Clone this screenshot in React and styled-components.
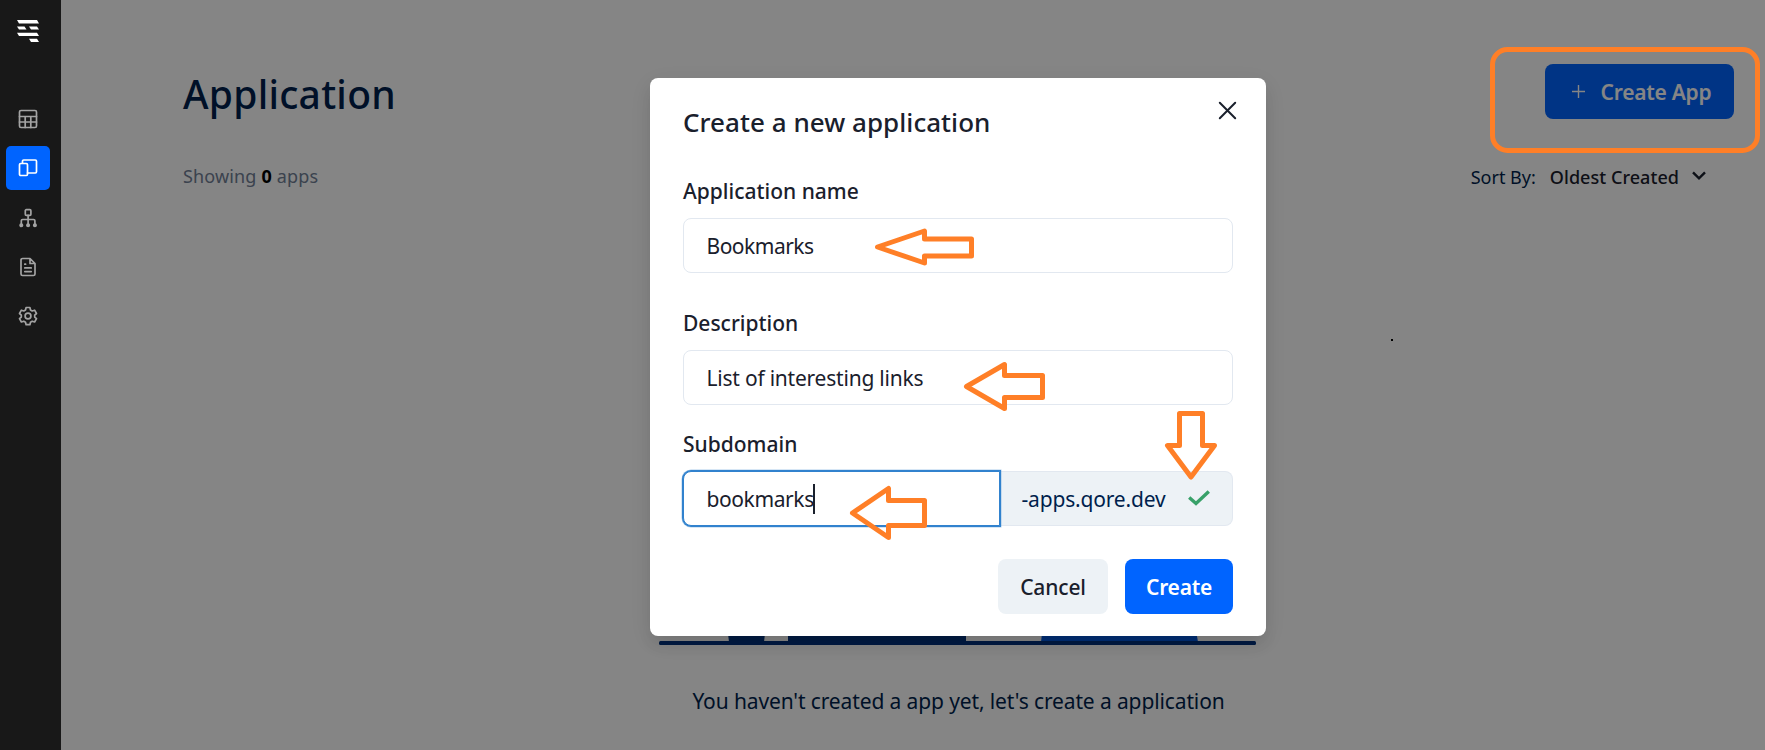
import React from "react";
import styled, { createGlobalStyle, css } from "styled-components";

const GlobalStyle = createGlobalStyle`
  * { box-sizing: border-box; }
  body {
    margin: 0;
    background: #fff;
    color: #1a202c;
    font-family: "Noto Sans", "Open Sans", sans-serif;
    overflow: hidden;
  }
  button, input { font-family: inherit; }
`;

const Shell = styled.div`
  display: flex;
  height: 750px;
  position: relative;
  overflow: hidden;
`;

const Sidebar = styled.nav`
  width: 61px;
  flex: none;
  padding-top: 20px;
  display: flex;
  flex-direction: column;
  align-items: center;
  background: #181818;
  z-index: 2;
`;

const Logo = styled.svg`
  width: 22px;
  height: 22px;
  margin: 0 5px 55px 0;
  fill: #fff;
`;

const NavList = styled.div`
  display: flex;
  flex-direction: column;
  gap: 5.3px;
  margin-right: 5px;
`;

const NavItem = styled.button`
  width: 44px;
  height: 44px;
  padding: 0;
  border: 0;
  border-radius: 5px;
  display: grid;
  place-items: center;
  background: ${(p) => (p.$active ? "#0064ff" : "transparent")};
  color: ${(p) => (p.$active ? "#fff" : "#a3a3a3")};
`;

const NavIcon = styled.svg`
  width: 20px;
  height: 20px;
  fill: none;
  stroke: currentColor;
  stroke-width: 1.7;
  stroke-linecap: round;
  stroke-linejoin: round;
`;

const Main = styled.main`
  flex: 1;
  padding: 64px 31px 0 122px;
`;

const PageHeader = styled.header`
  height: 55px;
  display: flex;
  align-items: center;
  justify-content: space-between;
`;

const PageTitle = styled.h1`
  margin: 5px 0 0;
  font-size: 39px;
  line-height: 48px;
  font-weight: 530;
  letter-spacing: 0.25px;
  color: #001f4d;
`;

const Button = styled.button`
  height: 55px;
  padding: 0;
  border: 0;
  border-radius: 8px;
  font-size: 21px;
  line-height: 30px;
  display: flex;
  align-items: center;
  justify-content: center;
  width: ${(p) => p.$width}px;
  ${(p) =>
    p.$primary
      ? css`
          background: #0064ff;
          color: #fff;
          font-weight: 600;
          letter-spacing: -0.25px;
        `
      : css`
          background: #edf2f6;
          color: #1a202c;
          font-weight: 500;
          letter-spacing: -0.15px;
        `}
`;

const PlusIcon = styled.svg`
  width: 13px;
  height: 13px;
  margin: 0 16px 0 4px;
  stroke: #fff;
  stroke-width: 1.4;
`;

const ListBar = styled.div`
  margin: 44px 28px 0 0;
  height: 27px;
  display: flex;
  align-items: center;
  justify-content: space-between;
  font-size: 18px;
  line-height: 27px;
`;

const Count = styled.div`
  color: #718096;
  letter-spacing: 0.15px;
  b { color: #000; }
`;

const Sort = styled.div`
  display: flex;
  align-items: center;
  padding-top: 1px;
  color: #001f4d;
`;

const SortValue = styled.span`
  margin-left: 14px;
  font-weight: 500;
  letter-spacing: 0.05px;
  color: #1a202c;
`;

const Chevron = styled.svg`
  width: 14px;
  height: 9px;
  margin: 0 0 3px 13px;
  fill: none;
  stroke: #1a202c;
  stroke-width: 2.4;
`;

const Empty = styled.section`
  margin-top: 155px;
  display: flex;
  flex-direction: column;
  align-items: center;
`;

const Illustration = styled.svg`
  width: 597px;
  height: 300px;
  margin-right: 2px;
`;

const EmptyText = styled.p`
  margin: 40px 0 0;
  font-size: 21px;
  line-height: 32px;
  letter-spacing: -0.12px;
  color: #001f4d;
`;

const Backdrop = styled.div`
  position: absolute;
  inset: 0 0 0 61px;
  padding: 78px 0 0 90px;
  display: flex;
  justify-content: center;
  align-items: flex-start;
  background: rgba(0, 0, 0, 0.48);
`;

const Dialog = styled.section`
  width: 616px;
  height: 558px;
  padding: 26px 33px 22px;
  border-radius: 8px;
  background: #fff;
  display: flex;
  flex-direction: column;
  box-shadow: 0 10px 15px -3px rgba(0, 0, 0, 0.1), 0 6px 24px rgba(0, 0, 0, 0.06);
`;

const DialogHeader = styled.header`
  display: flex;
  justify-content: space-between;
  margin-bottom: 36px;
`;

const DialogTitle = styled.h2`
  margin: 0;
  font-size: 26px;
  line-height: 36px;
  font-weight: 500;
  letter-spacing: 0.04px;
`;

const CloseIcon = styled.svg`
  width: 19px;
  height: 19px;
  margin: -3px -4px 0 0;
  stroke: #1a202c;
  stroke-width: 2;
  stroke-linecap: round;
`;

const Field = styled.label`
  display: flex;
  flex-direction: column;
  gap: 12px;
  margin-bottom: ${(p) => p.$after}px;
`;

const Label = styled.span`
  font-size: 21px;
  line-height: 30px;
  font-weight: 500;
`;

const InputBox = styled.span`
  height: 55px;
  padding: 0 22.5px;
  display: flex;
  align-items: center;
  border: 1px solid #e2e8f0;
  border-radius: 8px;
  background: #fff;
  font-size: 21px;
  line-height: 30px;
  letter-spacing: ${(p) => p.$track || 0}px;
  ${(p) =>
    p.$focused &&
    css`
      width: 317px;
      border-color: #3182ce;
      border-radius: 8px 0 0 8px;
      box-shadow: 0 0 0 1px #3182ce, 0 0 0 1.5px rgba(49, 130, 206, 0.4);
      z-index: 1;
    `}
`;

const Caret = styled.i`
  width: 2px;
  height: 30px;
  margin-left: -1px;
  background: #1a202c;
`;

const InputGroup = styled.span`
  display: flex;
`;

const Addon = styled.span`
  flex: 1;
  height: 55px;
  padding: 0 22px 0 21.5px;
  display: flex;
  align-items: center;
  justify-content: space-between;
  border: 1px solid #e2e8f0;
  border-left: 0;
  border-radius: 0 8px 8px 0;
  background: #edf2f6;
  color: #001f4d;
  font-size: 21px;
  line-height: 30px;
  letter-spacing: -0.18px;
`;

const CheckIcon = styled.svg`
  width: 22px;
  height: 16px;
  margin-bottom: 2px;
  fill: none;
  stroke: #38a169;
  stroke-width: 3.4;
`;

const Actions = styled.footer`
  display: flex;
  justify-content: flex-end;
  gap: 17px;
`;

const Annotations = styled.svg`
  position: absolute;
  inset: 0;
  width: 1765px;
  height: 750px;
  z-index: 3;
  pointer-events: none;
  fill: none;
  stroke: #ff7f27;
  stroke-width: 5;
  stroke-linejoin: round;
`;

const GEAR =
  "M8.1 1.5h3.8l.6 2.5 1.7 1 2.4-.8 1.9 3.3-1.8 1.6v2l1.8 1.6-1.9 3.3-2.4-.8-1.7 1-.6 2.5H8.1l-.6-2.5-1.7-1-2.4.8-1.9-3.3 1.8-1.6v-2L1.5 7.5l1.9-3.3 2.4.8 1.7-1z";

const icons = [
  <React.Fragment key="table">
    <rect x="1.5" y="1.5" width="17" height="17" rx="1.5" />
    <path d="M1.500 7.500h17M1.500 13h17M7.200 7.500v11M12.800 7.500v11" />
  </React.Fragment>,
  <React.Fragment key="apps">
    <path d="M4.500 5V3.200c0-.7.5-1.200 1.200-1.200h11.600c.7 0 1.200.5 1.200 1.200v10.600c0 .7-.5 1.200-1.200 1.200H9.500" />
    <rect x="1.500" y="5.500" width="8" height="12" rx="1.200" />
  </React.Fragment>,
  <React.Fragment key="tree">
    <rect x="7.3" y="1.7" width="5.6" height="5.6" rx="1" />
    <path d="M10.1 7.3v9.5M3.3 16.5v-3.7c0-.8.6-1.3 1.3-1.3h11c.8 0 1.3.5 1.3 1.3v3.7" />
    <g fill="currentColor">
      <circle cx="3.3" cy="17.2" r="1.2" />
      <circle cx="10.1" cy="17.2" r="1.2" />
      <circle cx="16.9" cy="17.2" r="1.2" />
    </g>
  </React.Fragment>,
  <React.Fragment key="file">
    <path d="M12 1.5H4.6c-.9 0-1.6.7-1.6 1.6v13.8c0 .9.7 1.6 1.6 1.6h10.8c.9 0 1.6-.7 1.6-1.6V6.5zM12 1.5v5h5M6.8 7.2h.8M6.8 10.9h6.4M6.8 14.6h6.4" />
  </React.Fragment>,
  <React.Fragment key="gear">
    <path d={GEAR} />
    <circle cx="10" cy="10" r="2.9" />
  </React.Fragment>,
];

export default function App() {
  return (
    <Shell>
      <GlobalStyle />
      <Sidebar>
        <Logo viewBox="0 0 22 22">
          <path d="M0 0h20l2 3.4H2zM0 6.4h7.5l2 3.2H2zM12 6.4h8l2 3.2h-8zM0 12.8h20l2 3.2H2zM12 18.8h8l2 3.2h-8z" />
        </Logo>
        <NavList>
          {icons.map((icon, i) => (
            <NavItem key={i} $active={i === 1}>
              <NavIcon viewBox="0 0 20 20">{icon}</NavIcon>
            </NavItem>
          ))}
        </NavList>
      </Sidebar>

      <Main>
        <PageHeader>
          <PageTitle>Application</PageTitle>
          <Button $primary $width={189}>
            <PlusIcon viewBox="0 0 13 13">
              <path d="M6.5 0v13M0 6.5h13" />
            </PlusIcon>
            Create App
          </Button>
        </PageHeader>
        <ListBar>
          <Count>
            Showing <b>0</b> apps
          </Count>
          <Sort>
            Sort By:
            <SortValue>Oldest Created</SortValue>
            <Chevron viewBox="0 0 14 9">
              <path d="M1 1.3l6 6 6-6" />
            </Chevron>
          </Sort>
        </ListBar>
        <Empty>
          <Illustration viewBox="0 0 597 300">
            <path fill="#00337f" d="M68 280h39l-2 17H70zM129 280h178v17H129z" />
            <path fill="#0058e0" d="M384 280h152l3 17H382z" />
            <rect y="296" width="597" height="4" rx="1.5" fill="#00337f" />
          </Illustration>
          <EmptyText>You haven't created a app yet, let's create a application</EmptyText>
        </Empty>
      </Main>

      <Backdrop>
        <Dialog>
          <DialogHeader>
            <DialogTitle>Create a new application</DialogTitle>
            <CloseIcon viewBox="0 0 19 19">
              <path d="M1.8 1.8l15.4 15.4M17.2 1.8L1.8 17.2" />
            </CloseIcon>
          </DialogHeader>
          <Field $after={35}>
            <Label>Application name</Label>
            <InputBox $track={-0.5}>Bookmarks</InputBox>
          </Field>
          <Field $after={24}>
            <Label>Description</Label>
            <InputBox $track={-0.22}>List of interesting links</InputBox>
          </Field>
          <Field $after={33}>
            <Label>Subdomain</Label>
            <InputGroup>
              <InputBox $focused $track={-0.4}>
                bookmarks
                <Caret />
              </InputBox>
              <Addon>
                -apps.qore.dev
                <CheckIcon viewBox="0 0 22 16">
                  <path d="M1.2 7.5l6.8 6L20.8 1.5" />
                </CheckIcon>
              </Addon>
            </InputGroup>
          </Field>
          <Actions>
            <Button $width={110}>Cancel</Button>
            <Button $primary $width={108}>Create</Button>
          </Actions>
        </Dialog>
      </Backdrop>

      <Annotations viewBox="0 0 1765 750">
        <rect x="1492.5" y="49.5" width="265" height="101" rx="15" />
        <path d="M877.5 247l47-16v8h47v17h-47v7z" />
        <path d="M966.5 386.5l38-22v11h38v22h-38v11z" />
        <path d="M852.5 513l36-24.500v12h36v25h-36v12z" />
        <path d="M1179.5 413.500h23v32h12l-23.500 31.500-23.500-31.500h12z" />
        <rect x="1391" y="339" width="2" height="2" fill="#000" stroke="none" />
      </Annotations>
    </Shell>
  );
}
